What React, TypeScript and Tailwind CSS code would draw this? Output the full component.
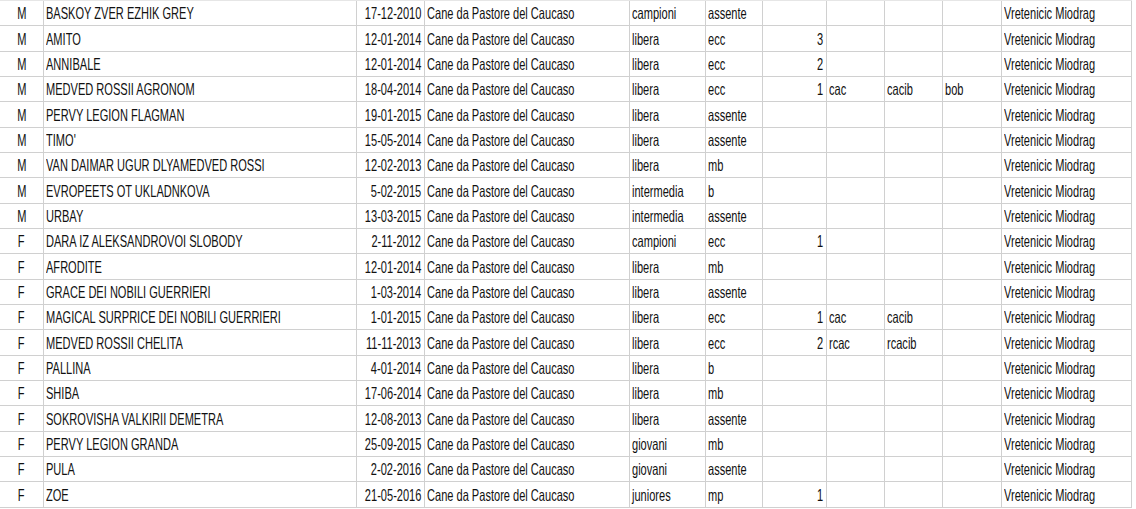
import React from 'react';

type Row = {
  sex: 'M' | 'F';
  name: string;
  born: string;
  cls: string;
  grade: string;
  place?: string;
  t1?: string;
  t2?: string;
  t3?: string;
};

const rows: Row[] = [
  { sex: 'M', name: 'BASKOY ZVER EZHIK GREY', born: '17-12-2010', cls: 'campioni', grade: 'assente' },
  { sex: 'M', name: 'AMITO', born: '12-01-2014', cls: 'libera', grade: 'ecc', place: '3' },
  { sex: 'M', name: 'ANNIBALE', born: '12-01-2014', cls: 'libera', grade: 'ecc', place: '2' },
  { sex: 'M', name: 'MEDVED ROSSII AGRONOM', born: '18-04-2014', cls: 'libera', grade: 'ecc', place: '1', t1: 'cac', t2: 'cacib', t3: 'bob' },
  { sex: 'M', name: 'PERVY LEGION FLAGMAN', born: '19-01-2015', cls: 'libera', grade: 'assente' },
  { sex: 'M', name: "TIMO'", born: '15-05-2014', cls: 'libera', grade: 'assente' },
  { sex: 'M', name: 'VAN DAIMAR UGUR DLYAMEDVED ROSSI', born: '12-02-2013', cls: 'libera', grade: 'mb' },
  { sex: 'M', name: 'EVROPEETS OT UKLADNKOVA', born: '5-02-2015', cls: 'intermedia', grade: 'b' },
  { sex: 'M', name: 'URBAY', born: '13-03-2015', cls: 'intermedia', grade: 'assente' },
  { sex: 'F', name: 'DARA IZ ALEKSANDROVOI SLOBODY', born: '2-11-2012', cls: 'campioni', grade: 'ecc', place: '1' },
  { sex: 'F', name: 'AFRODITE', born: '12-01-2014', cls: 'libera', grade: 'mb' },
  { sex: 'F', name: 'GRACE DEI NOBILI GUERRIERI', born: '1-03-2014', cls: 'libera', grade: 'assente' },
  { sex: 'F', name: 'MAGICAL SURPRICE DEI NOBILI GUERRIERI', born: '1-01-2015', cls: 'libera', grade: 'ecc', place: '1', t1: 'cac', t2: 'cacib' },
  { sex: 'F', name: 'MEDVED ROSSII CHELITA', born: '11-11-2013', cls: 'libera', grade: 'ecc', place: '2', t1: 'rcac', t2: 'rcacib' },
  { sex: 'F', name: 'PALLINA', born: '4-01-2014', cls: 'libera', grade: 'b' },
  { sex: 'F', name: 'SHIBA', born: '17-06-2014', cls: 'libera', grade: 'mb' },
  { sex: 'F', name: 'SOKROVISHA VALKIRII DEMETRA', born: '12-08-2013', cls: 'libera', grade: 'assente' },
  { sex: 'F', name: 'PERVY LEGION GRANDA', born: '25-09-2015', cls: 'giovani', grade: 'mb' },
  { sex: 'F', name: 'PULA', born: '2-02-2016', cls: 'giovani', grade: 'assente' },
  { sex: 'F', name: 'ZOE', born: '21-05-2016', cls: 'juniores', grade: 'mp', place: '1' },
];

const judge = 'Vretenicic Miodrag';

// one spreadsheet cell; text is squeezed sideways like the narrow sheet font
const Cell = ({ children, align = 'left' }: { children?: React.ReactNode; align?: 'left' | 'right' | 'center' }) => {
  const justify = align === 'right' ? 'justify-end pr-[3px]' : align === 'center' ? 'justify-center' : 'justify-start pl-[2px]';
  const origin = align === 'right' ? 'origin-right' : align === 'center' ? 'origin-center' : 'origin-left';
  return (
    <div className={`flex items-end ${justify} border-r border-b border-[#d0d0d0] pb-[3px] overflow-visible min-w-0`}>
      <span className={`inline-block whitespace-nowrap scale-x-[0.67] ${origin}`}>{children}</span>
    </div>
  );
};

export default function App() {
  return (
    <div className="w-[1136px] h-[509px] bg-white overflow-hidden">
      <div
        className="grid grid-cols-[44px_313px_68px_205px_76px_57px_64px_58px_58px_59px_130px] auto-rows-[25.33px] w-[1132px] border-t border-[#e6e6e6] text-[16.5px] leading-[18px] text-[#111111]"
        style={{ fontFamily: '"Liberation Sans", Arial, sans-serif' }}
      >
        {rows.map((r, i) => (
          <React.Fragment key={i}>
            <Cell align="center">{r.sex}</Cell>
            <Cell>{r.name}</Cell>
            <Cell align="right">{r.born}</Cell>
            <Cell>Cane da Pastore del Caucaso</Cell>
            <Cell>{r.cls}</Cell>
            <Cell>{r.grade}</Cell>
            <Cell align="right">{r.place}</Cell>
            <Cell>{r.t1}</Cell>
            <Cell>{r.t2}</Cell>
            <Cell>{r.t3}</Cell>
            <Cell>{judge}</Cell>
          </React.Fragment>
        ))}
      </div>
    </div>
  );
}
